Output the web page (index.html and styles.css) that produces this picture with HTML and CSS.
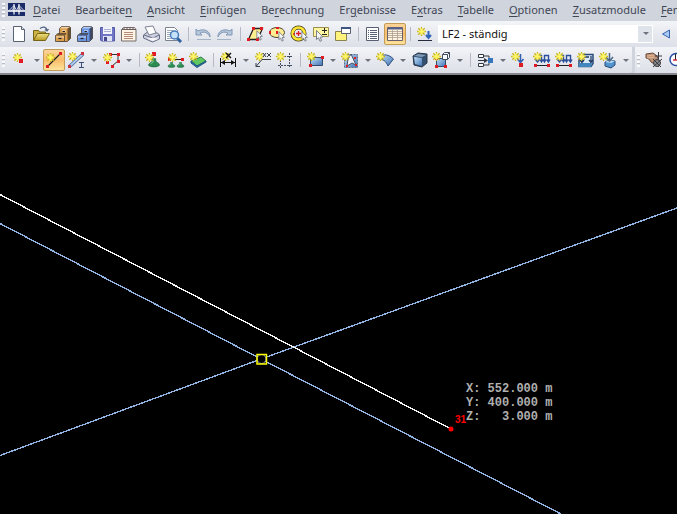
FILE: index.html
```html
<!DOCTYPE html>
<html lang="de">
<head>
<meta charset="utf-8">
<title>RFEM</title>
<link rel="stylesheet" href="styles.css">
</head>
<body>
<svg class="defs" aria-hidden="true">
  <defs>
    <linearGradient id="blue" x1="0" y1="0" x2="1" y2="1"><stop offset="0" stop-color="#c3e0f7"/><stop offset="1" stop-color="#3f73b5"/></linearGradient>
    <linearGradient id="gold" x1="0" y1="0" x2="0" y2="1"><stop offset="0" stop-color="#f2e184"/><stop offset="1" stop-color="#b79a22"/></linearGradient>
    <symbol id="star" viewBox="0 0 9 9"><path d="M4.500 0v9M0 4.500h9M1.300 1.300l6.400 6.400M7.700 1.300L1.300 7.700" stroke="#c9b51c" stroke-width="1.300"/><path d="M4.500 1.500v6M1.500 4.500h6" stroke="#fff766" stroke-width="2.200"/></symbol>
    <symbol id="cursor" viewBox="0 0 8 12"><path d="M1 .500v9l2-1.700 1.500 3.500 1.600-.7L4.700 7.200l2.700-.2z" fill="#f6f7f9" stroke="#6d7480" stroke-width=".9"/></symbol>
    <symbol id="cabinet" viewBox="0 0 16 16">
      <path d="M4.500 2.500l2-2h8l1 1v11l-3 3h-8z" fill="currentColor" stroke="#4a4038" stroke-width=".8"/>
      <path d="M5 2.500l2-1.700h8l-2.500 1.700z" fill="#fff" opacity=".5"/>
      <path d="M12.500 2.500l2.800-1.500v11.500l-2.800 2.500z" fill="#1c1714" opacity=".6"/>
      <path d="M7 5h4" stroke="#fff" stroke-width="1.600" opacity=".55"/>
      <path d="M7.500 5.500h2.500" stroke="#26211c"/>
      <path d="M.500 9.500l2.500-2h8l-1.500 2v6h-9z" fill="currentColor" stroke="#4a4038" stroke-width=".8"/>
      <path d="M1 9.500l2.200-1.600h7L9 9.500z" fill="#2e2824" opacity=".6"/>
      <path d="M1 10h8v2H1z" fill="#fff" opacity=".3"/>
      <path d="M3.500 12.500h3" stroke="#26211c" stroke-width="1.200"/>
    </symbol>
    <symbol id="support" viewBox="0 0 16 10"><path d="M6 0h4v3l4 3v2c-3 2-9 2-12 0V6l4-3z" fill="#2b8b50" stroke="#17613a" stroke-width=".7"/><path d="M7 1v3L4 6" stroke="#83d39d" fill="none"/></symbol>
    <symbol id="load" viewBox="0 0 20 18"><path d="M5.500 10.500v-6h4v6m3 0v-6h4v6M3.500 8.500l2 2.500 2-2.500m.500 0l1.500 2.500 1.500-2.500m0 0l1.500 2.500 1.500-2.500m.500 0l2 2.500 1.500-2.500" fill="none" stroke="#2a4f9c" stroke-width="1.400"/><path d="M3 14.500h14" stroke="#222"/><path d="M2 13h3v3H2zM15 13h3v3h-3z" fill="#e11b22"/></symbol>
  </defs>
</svg>

<nav class="menubar" aria-label="Hauptmenü">
  <span class="grip"></span>
  <svg class="logo" viewBox="0 0 17 13" aria-label="Brücke"><path fill="#192c67" d="M0 0h17v13H0z"/><path d="M6 2.500L1 7.500M6 2.500l2.500 5M6 4.500L3.500 7.500M11 2.500L8.500 7.500M11 2.500l5 5M11 4.500l2.500 3" stroke="#c5cce2" fill="none"/><path d="M0 8h17" stroke="#fff" stroke-width="1.600"/><path d="M6 1v10.500M11 1v10.500" stroke="#fff" stroke-width="1.200"/></svg>
  <a href="#"><u>D</u>atei</a>
  <a href="#">Bearbeite<u>n</u></a>
  <a href="#"><u>A</u>nsicht</a>
  <a href="#"><u>E</u>infügen</a>
  <a href="#">Be<u>r</u>echnung</a>
  <a href="#">Er<u>g</u>ebnisse</a>
  <a href="#">E<u>x</u>tras</a>
  <a href="#"><u>T</u>abelle</a>
  <a href="#"><u>O</u>ptionen</a>
  <a href="#"><u>Z</u>usatzmodule</a>
  <a href="#"><u>F</u>enster</a>
</nav>

<div class="toolbar" role="toolbar" aria-label="Standard">
  <span class="grip"></span>
  <button class="tool" aria-label="Neu"><svg viewBox="0 0 20 18"><path d="M4.500 1.500h8l3 3v12h-11z" fill="#fff" stroke="#596272"/><path d="M12.500 1.500v3h3" fill="#dfe5ed" stroke="#596272"/></svg></button>
  <button class="tool" aria-label="Öffnen"><svg viewBox="0 0 20 18"><path d="M2.500 15V5.500h5l1 1.500h6v3" fill="#cbb445" stroke="#766417"/><path d="M2.500 15.500l4-7h12l-4 7z" fill="url(#gold)" stroke="#766417"/><path d="M9 3.500c3-2.500 6-1.500 7 1.500m-2-.5l2 1.500 1.500-2" fill="none" stroke="#4b607c" stroke-width="1.200"/></svg></button>
  <button class="tool orange" aria-label="Projektmanager"><svg viewBox="0 0 20 18"><use href="#cabinet" x="2" y="1" width="16" height="16"/></svg></button>
  <button class="tool blue" aria-label="Blockmanager"><svg viewBox="0 0 20 18"><use href="#cabinet" x="2" y="1" width="16" height="16"/></svg></button>
  <button class="tool" aria-label="Speichern"><svg viewBox="0 0 20 18"><path d="M3.500 2.500h14v13.500h-13l-1-1z" fill="#7076c5" stroke="#555ba6"/><path d="M6 2h9v7H6z" fill="#f2f4fb"/><path d="M7 4.500h7M7 6.500h7" stroke="#a9afce"/><path d="M6 11h9v5H6z" fill="#dfe2f2"/><path d="M7 12h3v4H7z" fill="#43498c"/></svg></button>
  <button class="tool" aria-label="Protokoll"><svg viewBox="0 0 20 18"><path d="M2.500 4.500l2-2h11l1.500 2v11.500H2.500z" fill="#fdf4e5" stroke="#776b68"/><path d="M3 4.500h14M5 2.500v2m3-2v2m3-2v2m3-2v2" stroke="#655d62"/><path d="M5 7.500h9M5 9.500h9M5 11.500h9M5 13.500h9" stroke="#b68a79"/></svg></button>
  <button class="tool" aria-label="Drucken"><svg viewBox="0 0 20 18"><path d="M2.500 10l4-3 10 1 2 2v4l-7 3-9-4z" fill="#ced1e2" stroke="#676d82"/><path d="M4 2l8-1 3 7-7 2z" fill="#fff" stroke="#7c8292"/><path d="M3 10l9 3 6-3" fill="none" stroke="#676d82"/><path d="M6 13.500l6 2.500 5-2-4-1.500z" fill="#f6f6fa"/></svg></button>
  <button class="tool" aria-label="Seitenansicht"><svg viewBox="0 0 20 18"><path d="M2.500 2.500h9l3 3v10h-12z" fill="#fff" stroke="#7c8490"/><path d="M4 5.500h6M4 7.500h4M4 9.500h3M4 11.500h3M4 13.500h5" stroke="#9caabb"/><path d="M14 13l4 4" stroke="#31629e" stroke-width="3"/><circle cx="11.500" cy="10" r="4" fill="#c5e2fa" stroke="#477cba" stroke-width="1.500"/></svg></button>
  <span class="sep"></span>
  <button class="tool" aria-label="Rückgängig"><svg viewBox="0 0 20 18"><path d="M3 4v6h6L7 8c4-2 8-.5 10 4 .5-6-6-9-12-6z" fill="#b7c7dc" stroke="#8198b6"/><path d="M4 14.500h14" stroke="#a5b3c6"/></svg></button>
  <button class="tool" aria-label="Wiederherstellen"><svg viewBox="0 0 20 18"><path d="M17 4v6h-6l2-2C9 6 5 7.500 3 12c-.5-6 6-9 12-6z" fill="#b7c7dc" stroke="#8198b6"/><path d="M2 14.500h14" stroke="#a5b3c6"/></svg></button>
  <span class="sep"></span>
  <button class="tool" aria-label="Rhomboid wählen"><svg viewBox="0 0 20 18"><path d="M3.500 14.500l5-11h9l-5 11z" fill="#ffee91" stroke="#222" stroke-width="1.300"/><path d="M2 13h3v3H2zM7 2h3v3H7zM15 2h3v3h-3zM11 13h3v3h-3z" fill="#e11b22"/><use href="#cursor" x="11" y="5" width="7" height="11"/></svg></button>
  <button class="tool" aria-label="Ellipse wählen"><svg viewBox="0 0 20 18"><ellipse cx="10" cy="7.500" rx="7.500" ry="5" fill="#ffee91" stroke="#4b4432"/><path d="M2 6h2v3H2zM9 2h3v2H9zM9 6h2v3H9z" fill="#e11b22"/><use href="#cursor" x="11" y="6" width="7" height="11"/></svg></button>
  <button class="tool" aria-label="Kreisring wählen"><svg viewBox="0 0 20 18"><circle cx="9.500" cy="8.500" r="6" fill="none" stroke="#3f3918" stroke-width="4"/><circle cx="9.500" cy="8.500" r="6" fill="none" stroke="#ffe631" stroke-width="2.600"/><path d="M7 8.500h5M9.500 6v5M5 8v2" stroke="#e11b22" stroke-width="1.300"/><use href="#cursor" x="12" y="6" width="7" height="11"/></svg></button>
  <button class="tool" aria-label="Auswahl ändern"><svg viewBox="0 0 20 18"><path d="M2.500 2.500h15v9h-15z" fill="#fff6a1" stroke="#9c914d"/><path d="M11 5.500h5m-2.500-2.500v5M11 9.500h5" stroke="#222"/><use href="#cursor" x="4" y="5" width="9" height="12"/></svg></button>
  <button class="tool" aria-label="Sichtbarkeit"><svg viewBox="0 0 20 18"><path d="M2.500 6.500h11v9h-11z" fill="#fff37b" stroke="#8b824e"/><path d="M8.500 2.500h9v6h-9z" fill="#fff" stroke="#596171"/><path d="M8 3h10" stroke="#3e5684" stroke-width="2"/></svg></button>
  <span class="sep"></span>
  <button class="tool" aria-label="Navigator"><svg viewBox="0 0 20 18"><path d="M3.500 2.500h12v13h-12z" fill="#fff" stroke="#575f70"/><path d="M5 5.500h1m1 0h7M5 7.500h1m1 0h7M5 9.500h1m1 0h7M5 11.500h1m1 0h7M5 13.500h1m1 0h7" stroke="#596277"/></svg></button>
  <button class="tool active" aria-label="Tabellen" aria-pressed="true"><svg viewBox="0 0 20 18"><path d="M2.500 2.500h15v13h-15z" fill="#fff5df" stroke="#68616c"/><path d="M3 3.500h14" stroke="#55618d" stroke-width="2"/><path d="M3 6.500h14M3 8.500h14M3 10.500h14M3 12.500h14M7.500 5v10m5-10v10" stroke="#ae9d91" stroke-width=".8"/></svg></button>
  <span class="sep"></span>
  <button class="tool" aria-label="Neuer Lastfall"><svg viewBox="0 0 20 18"><use href="#star" x="2" y="2" width="9" height="9"/><path d="M13.500 6v7m-2.500-3l2.500 3 2.500-3" fill="none" stroke="#3064b9" stroke-width="2"/><path d="M3 15.500h14" stroke="#252c3b"/></svg></button>
  <span class="combo"><select class="loadcase" aria-label="Lastfall"><option>LF2 - ständig</option></select></span>
  <button class="tool" aria-label="Vorheriger Lastfall"><svg viewBox="0 0 20 18"><path d="M6.500 9l7-4v8z" fill="#a9c8f3" stroke="#3866b1"/></svg></button>
</div>

<div class="toolrow">
<div class="toolbar" role="toolbar" aria-label="Einfügen">
  <span class="grip"></span>
  <button class="tool" aria-label="Knoten"><svg viewBox="0 0 20 18"><use href="#star" x="4" y="2" width="9" height="9"/><path d="M10 8h4v4h-4z" fill="#e11b22"/></svg></button>
  <button class="drop" aria-label="Knoten-Optionen"></button>
  <button class="tool active" aria-label="Linie" aria-pressed="true"><svg viewBox="0 0 20 18"><path d="M4 15L16 3" stroke="#222" stroke-width="1.300"/><path d="M2 14h3v3H2zM15 1h3v3h-3z" fill="#e11b22"/><use href="#star" x="2" y="2" width="9" height="9"/></svg></button>
  <button class="tool split" aria-label="Stab"><svg viewBox="0 0 20 18"><path d="M3 15L16 3" stroke="#526c99" stroke-width="3.500"/><path d="M3 15L16 3" stroke="#abcdf0" stroke-width="1.800"/><path d="M14 1h3v3h-3zM1 14h3v3H1z" fill="#cc3540"/><use href="#star" x="1" y="1" width="9" height="9"/><path d="M12 11.500h5M12 16.500h5M14.500 11v5" stroke="#3a4f78"/></svg></button>
  <button class="drop" aria-label="Stab-Optionen"></button>
  <button class="tool split" aria-label="Polylinie"><svg viewBox="0 0 20 18"><path d="M8 3.500h8V10l-6 5" fill="none" stroke="#333"/><path d="M7 2h3v3H7zM15 2h3v3h-3zM15 9h3v3h-3zM9 14h3v3H9zM4 10h3v3H4z" fill="#e11b22"/><use href="#star" x="1" y="2" width="9" height="9"/></svg></button>
  <button class="drop" aria-label="Polylinien-Optionen"></button>
  <span class="sep"></span>
  <button class="tool" aria-label="Knotenlager"><svg viewBox="0 0 20 18"><use href="#support" x="3" y="7" width="14" height="10"/><path d="M8 1h4v4H8z" fill="#e11b22"/><use href="#star" x="1" y="2" width="9" height="9"/></svg></button>
  <button class="tool" aria-label="Linienlager"><svg viewBox="0 0 20 18"><path d="M4 8.500h12" stroke="#222"/><use href="#support" x="1" y="11" width="9" height="6"/><use href="#support" x="10" y="11" width="9" height="6"/><path d="M2 7h3v3H2zM15 7h3v3h-3z" fill="#e11b22"/><use href="#star" x="2" y="2" width="9" height="9"/></svg></button>
  <button class="tool" aria-label="Flächenlager"><svg viewBox="0 0 20 18"><path d="M3 10l10-4 5 4-9 5z" fill="#5fc75f" stroke="#397e49"/><path d="M3 10v2l6 4.500 9-5.500v-1l-9 5z" fill="#296fa8" stroke="#235b84"/><use href="#star" x="1" y="1" width="9" height="9"/></svg></button>
  <span class="sep"></span>
  <button class="tool" aria-label="Bemaßung"><svg viewBox="0 0 20 18"><use href="#star" x="3" y="1" width="9" height="9"/><path d="M2.500 7v9M17.500 7v9M3 11.500h14" stroke="#111"/><path d="M3 11.500l4-2.500v5zM17 11.500L13 9v5z" fill="#111"/><path d="M8 2l5 5M13 2L8 7" stroke="#111" stroke-width="1.400"/></svg></button>
  <button class="drop" aria-label="Bemaßungs-Optionen"></button>
  <button class="tool" aria-label="Kommentar"><svg viewBox="0 0 20 18"><use href="#star" x="2" y="1" width="9" height="9"/><path d="M18 8.500H9l-6 7M3 12v3.500h4M10 2l3 4m0-4l-3 4M14 2l4 4m0-4l-4 4" fill="none" stroke="#39414e"/></svg></button>
  <button class="tool" aria-label="Hilfslinien"><svg viewBox="0 0 20 18"><path d="M5.500 3v14M14.500 2v14M3 5.500h15M3 14.500h15" stroke="#424d61" stroke-dasharray="2 1"/><use href="#star" x="1" y="1" width="9" height="9"/></svg></button>
  <span class="sep"></span>
  <button class="tool split" aria-label="Fläche"><svg viewBox="0 0 20 18"><path d="M4.500 6.500h12v8h-12z" fill="url(#blue)" stroke="#354969"/><path d="M3 13h3v3H3zM15 5h3v3h-3z" fill="#e11b22"/><use href="#star" x="1" y="1" width="9" height="9"/></svg></button>
  <button class="drop" aria-label="Flächen-Optionen"></button>
  <button class="tool split" aria-label="Fläche wählen"><svg viewBox="0 0 20 18"><path d="M3.500 3.500h13v13h-13z" fill="url(#blue)" stroke="#5d6b80" stroke-dasharray="2 1"/><path d="M6 15l1-7 3-5 5 11-4-2z" fill="#eef3fa" stroke="#4b5361"/><path d="M5 14h2v2H5zM14 13h2v2h-2zM13 6h2v2h-2z" fill="#e11b22"/><use href="#star" x="0" y="1" width="9" height="9"/></svg></button>
  <button class="drop" aria-label="Auswahl-Optionen"></button>
  <button class="tool split" aria-label="Gekrümmte Fläche"><svg viewBox="0 0 20 18"><path d="M2.500 6C8 2.500 13 3.500 17.500 8L12 15C10 10 7 8 2.500 8z" fill="url(#blue)" stroke="#304d7d"/><use href="#star" x="0" y="1" width="9" height="9"/></svg></button>
  <button class="drop" aria-label="Krümmungs-Optionen"></button>
  <button class="tool" aria-label="Volumen"><svg viewBox="0 0 20 18"><path d="M3 5l5-3 9 1v9l-5 4-8-2z" fill="#34506f" stroke="#27364b"/><path d="M4 6l8 1v8l-7-2z" fill="url(#blue)"/><path d="M4 5l4-2 8 1-4 2z" fill="#8299b6"/></svg></button>
  <button class="tool" aria-label="Öffnung"><svg viewBox="0 0 20 18"><path d="M4.500 7.500h9v8h-9z" fill="url(#blue)" stroke="#354969"/><path d="M10.500 3.500h5v5h-5zM10.500 3.500l2-2h5v5l-2 2M15.500 3.500l2-2" fill="#f8fbff" stroke="#414b5a"/><path d="M3 6h3v3H3zM3 14h3v3H3zM12 14h3v3h-3z" fill="#e11b22"/><use href="#star" x="0" y="1" width="9" height="9"/></svg></button>
  <button class="drop" aria-label="Volumen-Optionen"></button>
  <span class="sep"></span>
  <button class="tool" aria-label="Kombination"><svg viewBox="0 0 20 18"><path d="M3.500 3.500h5v3h-5zM3.500 12.500h5v3h-5z" fill="#fff" stroke="#313844"/><path d="M9 5h5v3M9 14h5v-3M3 9.500h7" stroke="#313844" fill="none"/><path d="M9 7l4 2.500L9 12z" fill="#313844"/><path d="M13 7h5v5h-5z" fill="#3676bd"/></svg></button>
  <button class="drop" aria-label="Kombinations-Optionen"></button>
  <button class="tool" aria-label="Knotenlast"><svg viewBox="0 0 20 18"><path d="M10.500 3v8m-3-3l3 3.500 3-3.500" fill="none" stroke="#315eb0" stroke-width="1.500"/><path d="M9 12h4v4H9z" fill="#e11b22"/><use href="#star" x="1" y="1" width="9" height="9"/></svg></button>
  <button class="tool" aria-label="Stablast"><svg viewBox="0 0 20 18"><use href="#load" width="20" height="18"/><use href="#star" x="1" y="1" width="9" height="9"/></svg></button>
  <button class="tool" aria-label="Linienlast"><svg viewBox="0 0 20 18"><use href="#load" width="20" height="18"/><use href="#star" x="1" y="1" width="9" height="9"/></svg></button>
  <button class="tool" aria-label="Flächenlast"><svg viewBox="0 0 20 18"><path d="M4 3.500h13v9l-2 3H3v-6z" fill="#d8ebff" stroke="#294977" stroke-width="1.500"/><path d="M3 12h13l-1 4H3z" fill="#4287bd"/><path d="M6 5v6m9-6v6M4 9l2 2.500L8 9m5 0l2 2.500L17 9M8 6h5" fill="none" stroke="#263a61" stroke-width="1.300"/><use href="#star" x="1" y="1" width="9" height="9"/></svg></button>
  <button class="tool" aria-label="Volumenlast"><svg viewBox="0 0 20 18"><path d="M7 11l4-2 6 1v4l-4 3-6-2z" fill="#5294cd" stroke="#294977"/><path d="M7 11l6 1 4-2-6-1z" fill="#b8ddf4"/><path d="M11.500 2v7M8 6l3.500 4L15 6" fill="none" stroke="#4d6889" stroke-width="1.500"/><use href="#star" x="1" y="1" width="9" height="9"/></svg></button>
  <button class="drop" aria-label="Last-Optionen"></button>
</div>
<div class="toolbar rest" role="toolbar" aria-label="Ansicht">
  <span class="grip"></span>
  <button class="tool" aria-label="Verschieben"><svg viewBox="0 0 20 18"><path d="M2 3l7-1 4 3 2 5-3 4-5-3-2-3-3-1z" fill="#c19576" stroke="#65483c"/><path d="M3 5l7-1M3 7l7-1" stroke="#e2b798"/><path d="M14.500 1v15M11 5h7" stroke="#3b3b40"/><circle cx="13" cy="12" r="3.500" fill="#8b8b8e" stroke="#3b3b40"/><path d="M9 16l9-8M9 8l8 8" stroke="#3b3b40"/></svg></button>
  <button class="tool" aria-label="Drehen"><svg viewBox="0 0 20 18"><circle cx="10" cy="8.500" r="6" fill="#fff" stroke="#294fa2" stroke-width="1.500"/><path d="M9.500 3v6" stroke="#222"/><path d="M7 9h7" stroke="#d22b39" stroke-width="1.500"/></svg></button>
</div>
</div>

<main class="view">
  <svg viewBox="0 75 677 439" preserveAspectRatio="xMinYMin slice" role="img" aria-label="Modellansicht">
    <g class="member"><path d="M0 223.500L261 359 561 514"/><path d="M0 455.500L261 359 677 208"/></g>
    <path class="rubber" d="M0 194.500L451 429"/>
    <circle class="node" cx="261.500" cy="359" r="4.500"/>
    <path class="snap" d="M257 354.500h9.500v9.500H257z"/>
    <circle class="end" cx="451" cy="429" r="2.500"/>
    <text class="number" x="455" y="423">31</text>
    <g class="coords">
      <text x="466" y="392">X: 552.000 m</text>
      <text x="466" y="406">Y: 400.000 m</text>
      <text x="466" y="420">Z:   3.000 m</text>
    </g>
  </svg>
</main>
</body>
</html>
```
FILE: styles.css
```css
* { box-sizing: border-box; }
body {
  margin: 0;
  height: 100vh;
  display: flex;
  flex-direction: column;
  overflow: hidden;
  background: #000;
  font: 11px/16px "Noto Sans", "Open Sans", sans-serif;
}
.defs { position: absolute; width: 0; height: 0; }

.menubar, .toolbar { display: flex; align-items: center; flex: none; overflow: hidden; }
.menubar { height: 21px; padding-bottom: 2px; background: #d0d4dd; }
.menubar a {
  margin-right: 15px;
  color: #3f4654;
  text-decoration: none;
  white-space: nowrap;
}
.menubar u { text-underline-offset: 2px; }
.logo { flex: none; width: 17px; height: 13px; margin-right: 8px; }

.grip {
  flex: none;
  width: 3px;
  height: 14px;
  margin: 0 3px 0 2px;
  background: repeating-linear-gradient(#f8f9fb 0 2px, #b9bdc7 2px 3px, transparent 3px 4px);
}
.toolbar {
  height: 26px;
  background: linear-gradient(#f4f5f8, #e8eaf0 45%, #dde0e8);
}
.toolrow { display: flex; flex: none; border-bottom: 2px solid #85878c; background: #d0d4dd; }
.toolrow .toolbar { height: 26px; flex: none; border-radius: 0 0 3px 0; }
.toolrow .rest { flex: 1 1 0; margin-left: 3px; border-radius: 0; }
.sep { flex: none; width: 8px; height: 14px; background: linear-gradient(#b5bac6, #b5bac6) center / 1px 100% no-repeat; }

button { border: 0; padding: 0; background: none; font: inherit; }
.tool {
  flex: none;
  width: 22px;
  height: 22px;
  display: grid;
  place-items: center;
}
.tool svg { width: 20px; height: 18px; display: block; fill: none; }
.split { padding-left: 2px; }
.orange { color: #dca04c; }
.blue { color: #6794e4; }
.active {
  border: 1px solid #c29b55;
  border-radius: 2px;
  background: linear-gradient(#fbd49a, #f9bd69 50%, #ffe39c);
}
.drop { flex: none; width: 13px; height: 22px; display: grid; place-items: center; }
.drop::before, .combo::after {
  content: "";
  border: 3px solid transparent;
  border-top-color: #6d727c;
  border-bottom: 0;
}
.combo {
  position: relative;
  flex: 1 1 0;
  max-width: 216px;
  min-width: 80px;
  height: 18px;
  margin: 0 2px;
}
.combo::after { position: absolute; right: 4px; top: 7px; pointer-events: none; }
.loadcase {
  display: block;
  width: 100%;
  height: 100%;
  padding: 0 3px;
  border: 1px solid #fff;
  border-radius: 0;
  appearance: none;
  color: #111;
  font: inherit;
  line-height: 16px;
  background: linear-gradient(#dfe3ea, #dfe3ea) right / 14px 100% no-repeat #fff;
}

.view { flex: 1; min-height: 0; }
.view svg { display: block; width: 100%; height: 100%; }
.member, .rubber { fill: none; stroke-width: 1.4; shape-rendering: crispEdges; }
.member { stroke: #8fb2e0; }
.rubber { stroke: #f4f4f4; }
.node { fill: #000; stroke: #98aac2; }
.snap { fill: none; stroke: #ff0; stroke-width: 1.5; }
.end { fill: #f00; }
.number { fill: #f00; font: bold 10px "Liberation Sans", sans-serif; }
.coords text { fill: #b0b0b0; font: bold 12px "Liberation Mono", monospace; white-space: pre; }
```
